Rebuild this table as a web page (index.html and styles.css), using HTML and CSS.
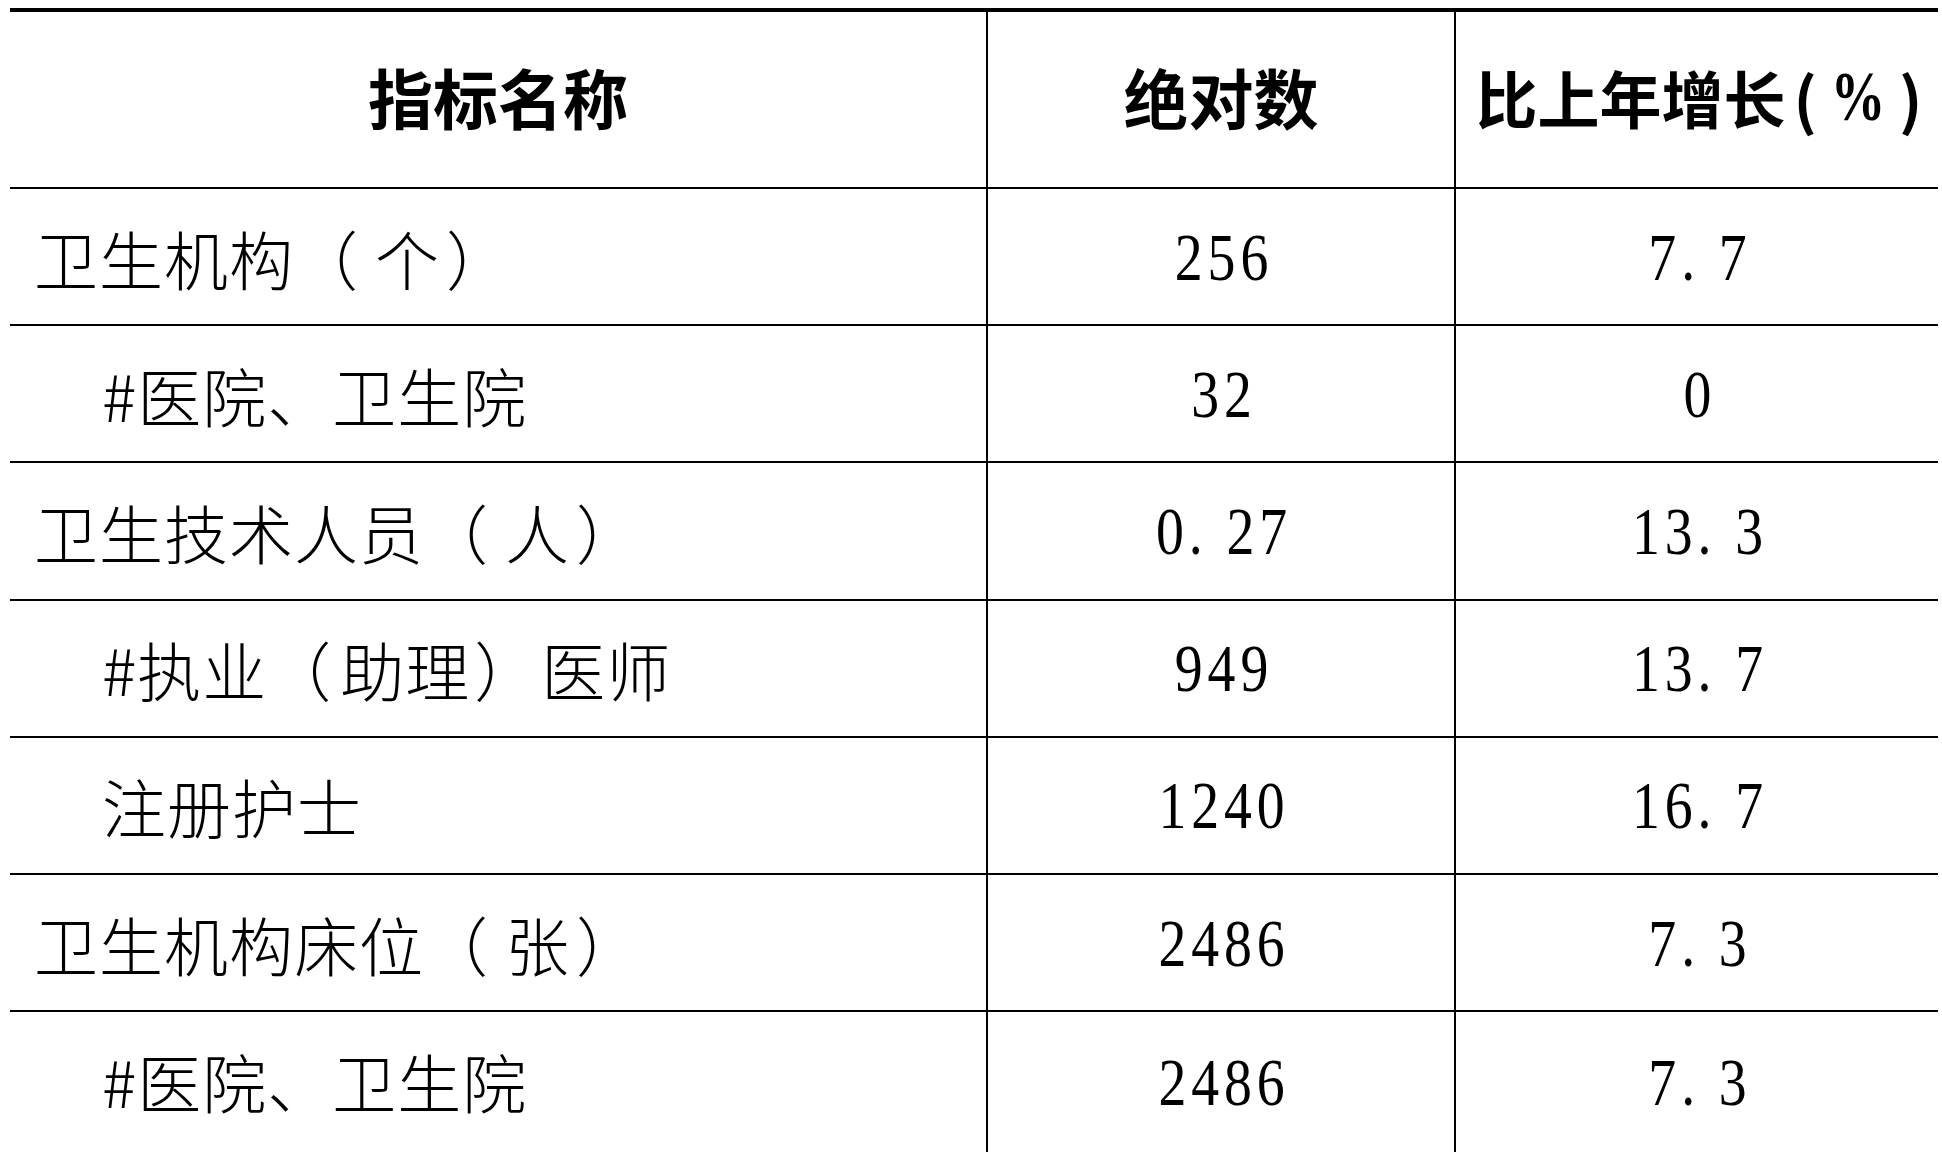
FILE: index.html
```html
<!DOCTYPE html>
<html lang="zh-CN">
<head>
<meta charset="utf-8">
<title>卫生</title>
<link rel="stylesheet" href="styles.css">
</head>
<body>
<div class="table">
  <div class="row head">
    <div class="cell c1 center">指标名称</div>
    <div class="cell c2 center">绝对数</div>
    <div class="cell c3 center narrow">比上年增长<span class="po">(</span><span class="pct">%</span><span class="pc">)</span></div>
  </div>
  <div class="row">
    <div class="cell c1 lv1">卫生机构<span class="fo">（</span>个<span class="fc">）</span></div>
    <div class="cell c2 center"><span class="num">256</span></div>
    <div class="cell c3 center"><span class="num">7. 7</span></div>
  </div>
  <div class="row">
    <div class="cell c1 lv2">#医院、卫生院</div>
    <div class="cell c2 center"><span class="num">32</span></div>
    <div class="cell c3 center"><span class="num">0</span></div>
  </div>
  <div class="row">
    <div class="cell c1 lv1">卫生技术人员<span class="fo">（</span>人<span class="fc">）</span></div>
    <div class="cell c2 center"><span class="num">0. 27</span></div>
    <div class="cell c3 center"><span class="num">13. 3</span></div>
  </div>
  <div class="row">
    <div class="cell c1 lv2">#执业<span class="fo mid">（</span>助理<span class="fc mid">）</span>医师</div>
    <div class="cell c2 center"><span class="num">949</span></div>
    <div class="cell c3 center"><span class="num">13. 7</span></div>
  </div>
  <div class="row">
    <div class="cell c1 lv2">注册护士</div>
    <div class="cell c2 center"><span class="num">1240</span></div>
    <div class="cell c3 center"><span class="num">16. 7</span></div>
  </div>
  <div class="row">
    <div class="cell c1 lv1">卫生机构床位<span class="fo">（</span>张<span class="fc">）</span></div>
    <div class="cell c2 center"><span class="num">2486</span></div>
    <div class="cell c3 center"><span class="num">7. 3</span></div>
  </div>
  <div class="row last">
    <div class="cell c1 lv2">#医院、卫生院</div>
    <div class="cell c2 center"><span class="num">2486</span></div>
    <div class="cell c3 center"><span class="num">7. 3</span></div>
  </div>
</div>
</body>
</html>
```

FILE: styles.css
```css
html, body {
  margin: 0;
  padding: 0;
  background: #fff;
  overflow: hidden;
}

body {
  height: 1152px;
  color: #000;
  font-family: "Noto Sans CJK SC", "Noto Sans", sans-serif;
}

.table {
  margin: 8px 0 0 10px;
  width: 1928px;
  border-top: 4px solid #000;
}

.row {
  display: grid;
  grid-template-columns: 978px 468px 482px;
  height: 137.2px;
}

.row.head {
  height: 177px;
}

.row.last {
  height: 180px;
}

.cell {
  display: flex;
  align-items: center;
  box-sizing: border-box;
  border-bottom: 2px solid #000;
  font-size: 64px;
  font-weight: 300;
  line-height: 1;
  letter-spacing: 1px;
  white-space: nowrap;
}

.row.last .cell {
  border-bottom: none;
  align-items: flex-start;
  padding-top: 36px;
}

.c1, .c2 {
  border-right: 2px solid #000;
}

.center {
  justify-content: center;
}

.lv1 {
  padding-left: 24px;
}

.lv2 {
  padding-left: 92px;
}

.fo {
  margin-right: 16px;
}

.fo.mid {
  margin-right: 8px;
}

.fc {
  margin-left: 6px;
}

.fc.mid {
  margin-left: 4px;
  margin-right: 2px;
}

.head .cell {
  font-size: 65px;
  font-weight: 700;
  letter-spacing: 0;
  padding-bottom: 6px;
}

.head .cell.narrow {
  font-size: 62px;
  padding-left: 4px;
}

.head .po {
  margin: 0 6px 0 8px;
}

.head .pc {
  margin-left: 6px;
}

.head .pct {
  font-family: "Liberation Serif", serif;
  font-weight: 700;
  font-size: 70px;
  display: inline-block;
  transform: scaleX(0.78);
}

.num {
  display: inline-block;
  font-family: "Liberation Serif", serif;
  font-weight: 400;
  font-size: 68px;
  letter-spacing: 6px;
  margin-right: -6px;
  transform: scaleX(0.82);
}
```
